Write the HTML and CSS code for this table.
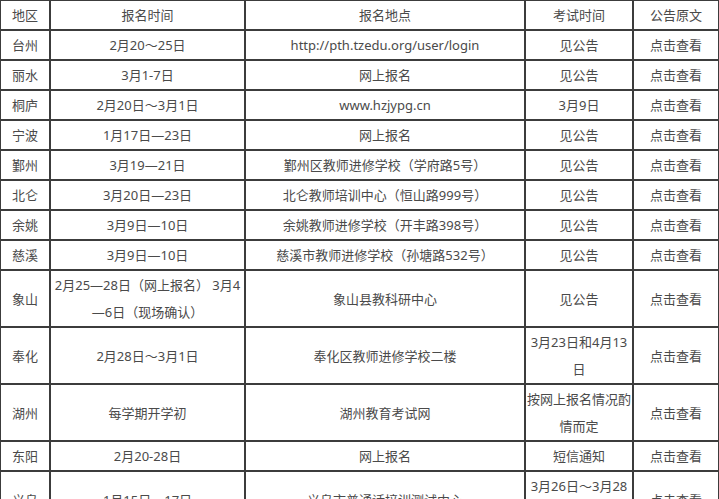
FILE: index.html
```html
<!DOCTYPE html>
<html lang="zh-CN">
<head>
<meta charset="utf-8">
<title>报名信息</title>
<link rel="stylesheet" href="styles.css">
</head>
<body>
<table class="exam-table">
  <colgroup>
    <col class="c-area">
    <col class="c-time">
    <col class="c-place">
    <col class="c-exam">
    <col class="c-link">
  </colgroup>
  <tbody>
    <tr><td>地区</td><td>报名时间</td><td>报名地点</td><td>考试时间</td><td>公告原文</td></tr>
    <tr><td>台州</td><td>2月20～25日</td><td>http://pth.tzedu.org/user/login</td><td>见公告</td><td>点击查看</td></tr>
    <tr><td>丽水</td><td>3月1-7日</td><td>网上报名</td><td>见公告</td><td>点击查看</td></tr>
    <tr><td>桐庐</td><td>2月20日～3月1日</td><td>www.hzjypg.cn</td><td>3月9日</td><td>点击查看</td></tr>
    <tr><td>宁波</td><td>1月17日—23日</td><td>网上报名</td><td>见公告</td><td>点击查看</td></tr>
    <tr><td>鄞州</td><td>3月19—21日</td><td>鄞州区教师进修学校（学府路5号）</td><td>见公告</td><td>点击查看</td></tr>
    <tr><td>北仑</td><td>3月20日—23日</td><td>北仑教师培训中心（恒山路999号）</td><td>见公告</td><td>点击查看</td></tr>
    <tr><td>余姚</td><td>3月9日—10日</td><td>余姚教师进修学校（开丰路398号）</td><td>见公告</td><td>点击查看</td></tr>
    <tr><td>慈溪</td><td>3月9日—10日</td><td>慈溪市教师进修学校（孙塘路532号）</td><td>见公告</td><td>点击查看</td></tr>
    <tr><td>象山</td><td>2月25—28日（网上报名） 3月4<br>—6日（现场确认）</td><td>象山县教科研中心</td><td>见公告</td><td>点击查看</td></tr>
    <tr><td>奉化</td><td>2月28日～3月1日</td><td>奉化区教师进修学校二楼</td><td>3月23日和4月13<br>日</td><td>点击查看</td></tr>
    <tr><td>湖州</td><td>每学期开学初</td><td>湖州教育考试网</td><td>按网上报名情况酌<br>情而定</td><td>点击查看</td></tr>
    <tr><td>东阳</td><td>2月20-28日</td><td>网上报名</td><td>短信通知</td><td>点击查看</td></tr>
    <tr><td>义乌</td><td>1月15日～17日</td><td>义乌市普通话培训测试中心</td><td>3月26日～3月28<br>日</td><td>点击查看</td></tr>
  </tbody>
</table>
</body>
</html>
```

FILE: styles.css
```css
html, body {
  margin: 0;
  padding: 0;
  background: #ffffff;
}

.exam-table {
  width: 719px;
  table-layout: fixed;
  border-collapse: separate;
  border-spacing: 0;
  font-family: "Noto Sans", "Noto Sans CJK SC", sans-serif;
  font-size: 13px;
  color: #4a4a4a;
}

.c-area { width: 50px; }
.c-time { width: 195px; }
.c-place { width: 280px; }
.c-exam { width: 108px; }
.c-link { width: 86px; }

.exam-table td {
  border: 1px solid #3c3c3c;
  padding: 1px 0 0 0;
  line-height: 27px;
  text-align: center;
  vertical-align: middle;
  white-space: nowrap;
}
```
